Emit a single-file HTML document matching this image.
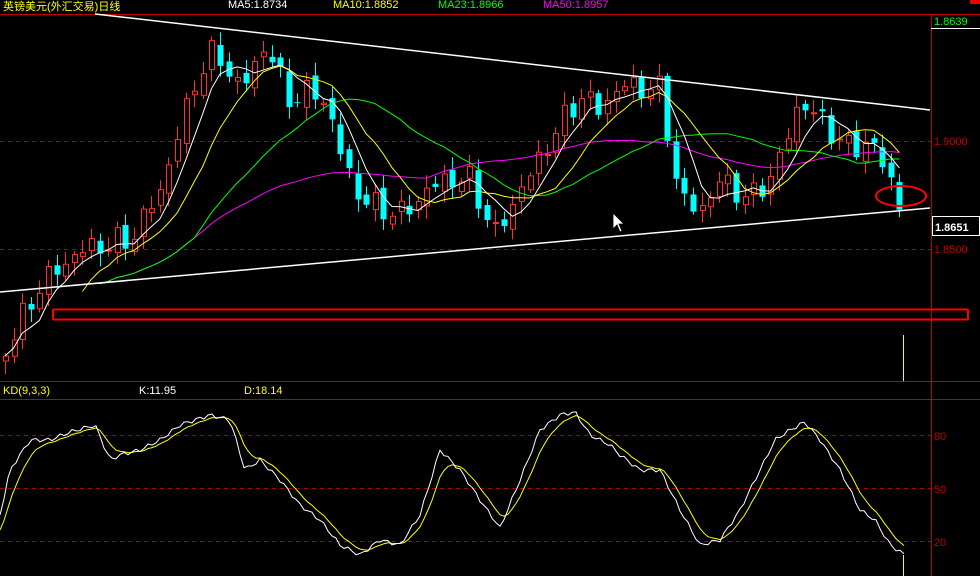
<!DOCTYPE html>
<html><head><meta charset="utf-8"><style>
html,body{margin:0;padding:0;background:#000;width:980px;height:576px;overflow:hidden}
svg{display:block}
text{font-family:"Liberation Sans","Noto Sans CJK SC",sans-serif;font-size:11px}
</style></head><body>
<svg id="s" width="980" height="576" xmlns="http://www.w3.org/2000/svg">
<rect width="980" height="576" fill="#000"/>
<text x="3" y="10" fill="#ffff00" font-size="14" style="font-family:'Liberation Sans','Noto Sans CJK SC',sans-serif">英镑美元(外汇交易)日线</text>
<text x="228" y="8" fill="#ffffff">MA5:1.8734</text>
<text x="333" y="8" fill="#ffff00">MA10:1.8852</text>
<text x="438" y="8" fill="#00ff00">MA23:1.8966</text>
<text x="543" y="8" fill="#ff00ff">MA50:1.8957</text>
<rect x="970" y="0" width="10" height="4" fill="#e00"/>
<line x1="0" y1="14.5" x2="980" y2="14.5" stroke="#c00000"/>
<line x1="931.5" y1="14" x2="931.5" y2="576" stroke="#c00000"/>
<line x1="931" y1="28.5" x2="980" y2="28.5" stroke="#fff"/>
<text x="934" y="25" fill="#00ff00">1.8639</text>
<line x1="0" y1="141.5" x2="931" y2="141.5" stroke="#b00000" stroke-dasharray="4,4"/>
<line x1="0" y1="249.5" x2="931" y2="249.5" stroke="#b00000" stroke-dasharray="4,4"/>
<text x="934" y="145" fill="#c00000">1.9000</text>
<text x="934" y="253" fill="#c00000">1.8500</text>
<rect x="932.5" y="216.5" width="47" height="19" fill="#000" stroke="#fff"/>
<text x="935" y="231" fill="#fff" font-size="13" font-weight="bold">1.8651</text>
<line x1="0" y1="381.5" x2="980" y2="381.5" stroke="#c00000"/>
<line x1="0" y1="399.5" x2="980" y2="399.5" stroke="#c00000"/>
<text x="3" y="394" fill="#ffff00">KD(9,3,3)</text>
<text x="139" y="394" fill="#fff">K:11.95</text>
<text x="244" y="394" fill="#ffff00">D:18.14</text>
<line x1="0" y1="435.5" x2="931" y2="435.5" stroke="#b00000" stroke-dasharray="4,4"/>
<line x1="0" y1="488.5" x2="931" y2="488.5" stroke="#b00000" stroke-dasharray="4,4"/>
<line x1="0" y1="541.5" x2="931" y2="541.5" stroke="#b00000" stroke-dasharray="4,4"/>
<text x="934" y="440" fill="#c00000">80</text>
<text x="934" y="493" fill="#c00000">50</text>
<text x="934" y="546" fill="#c00000">20</text>
<line x1="903.5" y1="335" x2="903.5" y2="381" stroke="#ffff00"/>
<line x1="903.5" y1="555" x2="903.5" y2="576" stroke="#ffff00"/>
<g id="c"></g>
<line x1="95" y1="14" x2="930" y2="110" stroke="#fff" stroke-width="1.5"/>
<line x1="0" y1="292" x2="930" y2="208" stroke="#fff" stroke-width="1.5"/>
<rect x="53" y="309.5" width="915" height="10" rx="1" fill="none" stroke="#f00" stroke-width="2"/>
<ellipse cx="901" cy="196" rx="25" ry="10" fill="none" stroke="#f00" stroke-width="2"/>
<path d="M613,213 l0,16 l4,-4 l3,7 l2,-1 l-3,-7 l5,0z" fill="#fff" stroke="#000" stroke-width="0.8"/>
</svg>
<script>
(function(){
var NS="http://www.w3.org/2000/svg",g=document.getElementById('c');
function el(t,a){var e=document.createElementNS(NS,t);for(var k in a)e.setAttribute(k,a[k]);g.appendChild(e);return e;}
var P=[[5,350],[40,285],[80,250],[130,240],[160,190],[195,80],[215,50],[240,90],[265,45],[290,100],[320,90],[340,150],[360,200],[400,215],[440,180],[470,180],[495,235],[520,190],[550,140],[580,95],[600,110],[620,85],[660,90],[680,200],[700,210],[720,180],[750,200],[775,170],[800,100],[820,120],[850,150],[870,140],[890,180],[905,215]];
function interp(A,x){for(var i=0;i<A.length-1;i++){if(x<=A[i+1][0]){var t=(x-A[i][0])/(A[i+1][0]-A[i][0]);return A[i][1]+t*(A[i+1][1]-A[i][1]);}}return A[A.length-1][1];}
var xs=[],cl=[];var step=8.6;
for(var x=5,i=0;x<=906;x+=step,i++){xs.push(x);cl.push(interp(P,x)+Math.sin(i*2.3)*9+Math.cos(i*1.7)*6);}
var op=[cl[0]+5];for(var i=1;i<cl.length;i++)op.push(cl[i-1]+Math.sin(i*3.1)*5);
for(var i=0;i<cl.length;i++){var o=op[i],c=cl[i],x=Math.round(xs[i]);var bt=Math.min(o,c),bb=Math.max(o,c);if(bb-bt<1)bb=bt+1;
var hi=bt-3-Math.abs(Math.sin(i*5.1))*10,lo=bb+3+Math.abs(Math.cos(i*4.3))*10;
var up=c<o;var col=up?"#ff3030":"#00ffff";
el('line',{x1:x+.5,y1:hi,x2:x+.5,y2:lo,stroke:col});
if(up)el('rect',{x:x-2+.5,y:bt,width:5,height:bb-bt,fill:"#000",stroke:col});
else el('rect',{x:x-2.5,y:bt,width:6,height:bb-bt,fill:col});}
function ma(n,col){var d="";for(var i=0;i<cl.length;i++){var s=0,m=Math.min(n,i+1);for(var j=0;j<m;j++)s+=cl[i-j];var v=s/m;if(i<Math.min(n,12)-1&&n>5)continue;d+=(d?"L":"M")+xs[i].toFixed(1)+","+v.toFixed(1);}el('path',{d:d,fill:"none",stroke:col,"stroke-width":1});}
ma(50,"#ff00ff");ma(23,"#00ff00");ma(10,"#ffff00");ma(5,"#ffffff");
var K=[[0,515],[10,470],[30,440],[50,440],[70,432],[95,425],[110,460],[120,455],[140,450],[160,440],[180,425],[210,415],[230,420],[245,470],[260,460],[280,480],[300,505],[320,520],[340,545],[360,555],[380,540],[400,545],[420,515],[440,450],[460,470],[480,500],[500,528],[520,480],[540,430],[560,415],[575,412],[590,435],[610,445],[620,455],[640,470],[660,470],[680,510],[700,545],[720,540],[740,510],[760,470],[775,440],[790,430],[805,422],[820,440],[840,470],[860,510],[875,520],[890,545],[905,555]];
var dk="",dd="",prev=null;for(var x=0;x<=905;x+=4){var y=interp(K,x)+Math.sin(x*0.5)*2;dk+=(dk?"L":"M")+x+","+y.toFixed(1);prev=prev===null?y+15:prev+(y-prev)*0.3;dd+=(dd?"L":"M")+x+","+prev.toFixed(1);}
el('path',{d:dd,fill:"none",stroke:"#ffff00"});el('path',{d:dk,fill:"none",stroke:"#ffffff"});
})();
</script>
</body></html>
